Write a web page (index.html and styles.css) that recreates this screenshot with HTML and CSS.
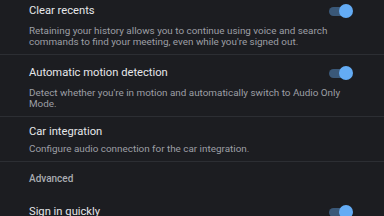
FILE: index.html
```html
<!DOCTYPE html>
<html>
<head>
<meta charset="utf-8">
<link rel="stylesheet" href="styles.css">
</head>
<body>
<div class="screen">
  <div class="list">
    <div class="item item-toggle">
      <div class="item-head">
        <div class="title">Clear recents</div>
        <div class="switch on"><span class="track"></span><span class="thumb"></span></div>
      </div>
      <div class="desc">Retaining your history allows you to continue using voice and search commands to find your meeting, even while you're signed out.</div>
    </div>
    <div class="item item-toggle">
      <div class="item-head">
        <div class="title">Automatic motion detection</div>
        <div class="switch on"><span class="track"></span><span class="thumb"></span></div>
      </div>
      <div class="desc">Detect whether you're in motion and automatically switch to Audio Only Mode.</div>
    </div>
    <div class="item">
      <div class="item-head">
        <div class="title">Car integration</div>
      </div>
      <div class="desc">Configure audio connection for the car integration.</div>
    </div>
    <div class="section-header">Advanced</div>
    <div class="item item-toggle no-border">
      <div class="item-head">
        <div class="title">Sign in quickly</div>
        <div class="switch on"><span class="track"></span><span class="thumb"></span></div>
      </div>
    </div>
  </div>
</div>
</body>
</html>
```
FILE: styles.css
```css
html, body {
  margin: 0;
  padding: 0;
  background: #1c1d21;
}
body {
  width: 384px;
  height: 216px;
  overflow: hidden;
  font-family: Roboto, "Noto Sans", "Liberation Sans", sans-serif;
}
.screen {
  width: 384px;
  height: 216px;
  overflow: hidden;
  background: #1c1d21;
}
.list {
  margin-top: -7px;
  display: flex;
  flex-direction: column;
}
.item {
  padding: 6px 31px 6.5px 29px;
  border-bottom: 1px solid #2c2e33;
}
.item.no-border {
  border-bottom: none;
}
.item-head {
  display: flex;
  align-items: center;
  justify-content: space-between;
  min-height: 18px;
}
.item-toggle .item-head {
  min-height: 24px;
}
.title {
  font-size: 11.2px;
  line-height: 18px;
  color: #e6e7ea;
}
.desc {
  margin-top: 1.5px;
  font-size: 9.9px;
  line-height: 11.5px;
  color: #9c9fa5;
}
.section-header {
  padding: 10px 29px 8px;
  font-size: 10px;
  line-height: 14px;
  font-weight: 500;
  color: #a9acb1;
}
.switch {
  position: relative;
  width: 24px;
  height: 14px;
  flex: none;
}
.switch .track {
  position: absolute;
  left: 0;
  top: 3px;
  width: 20px;
  height: 9px;
  border-radius: 4.5px;
  background: #3a5878;
}
.switch .thumb {
  position: absolute;
  right: 0;
  top: 0;
  width: 14px;
  height: 14px;
  border-radius: 50%;
  background: #64acf5;
}
```
